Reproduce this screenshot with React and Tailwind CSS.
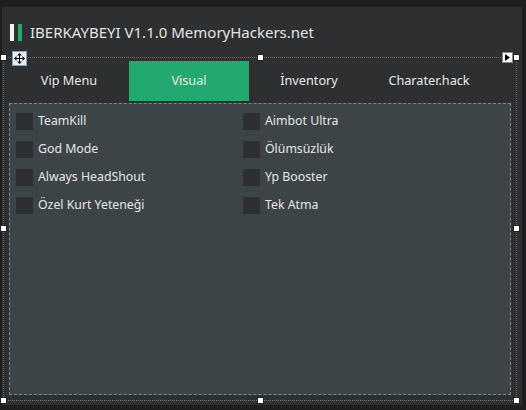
import { useState } from "react";

const TABS = ["Vip Menu", "Visual", "İnventory", "Charater.hack"];

const LEFT_OPTIONS = ["TeamKill", "God Mode", "Always HeadShout", "Özel Kurt Yeteneği"];
const RIGHT_OPTIONS = ["Aimbot Ultra", "Ölümsüzlük", "Yp Booster", "Tek Atma"];

function Handle({ className }) {
  return <div className={`absolute h-[7px] w-[7px] border border-[#222] bg-white ${className}`} />;
}

function Option({ label, checked, onToggle }) {
  return (
    <button type="button" onClick={onToggle} className="flex h-[28px] items-center gap-[5px] text-left">
      <span className="flex h-[17px] w-[17px] items-center justify-center bg-[#2d2f31]">
        {checked && <span className="h-[9px] w-[9px] bg-[#23a96f]" />}
      </span>
      <span className="text-[12.3px] text-[#e6e6e6]">{label}</span>
    </button>
  );
}

export default function App() {
  const [active, setActive] = useState(1);
  const [checked, setChecked] = useState({});

  const toggle = (key) => setChecked((cur) => ({ ...cur, [key]: !cur[key] }));

  return (
    <div
      className="h-[410px] w-[526px] overflow-hidden bg-[#1e1e1e] pt-[7px]"
      style={{ fontFamily: '"Noto Sans", "Open Sans", sans-serif' }}
    >
      <div className="relative ml-[2px] h-[398px] w-[520px] bg-[#2d2f31]">
        {/* title */}
        <div className="flex h-[50px] items-center gap-[4px] pl-[8px] pt-[1px]">
          <span className="h-[17px] w-[4px] bg-[#f2f2f2]" />
          <span className="h-[17px] w-[4px] bg-[#23a96f]" />
          <span className="ml-[4px] text-[15px] text-[#e4e4e4]">IBERKAYBEYI V1.1.0 MemoryHackers.net</span>
        </div>

        {/* selected tab control */}
        <div className="relative ml-[1px] h-[344px] w-[514px] border border-dotted border-[#6f7275] px-[5px] pt-[3px]">
          <div className="flex h-[40px]">
            {TABS.map((tab, i) => (
              <button
                key={tab}
                type="button"
                onClick={() => setActive(i)}
                className={`flex w-[120px] items-center justify-center text-[12.7px] text-[#e8e8e8] ${
                  i === active ? "bg-[#23a96f]" : ""
                }`}
              >
                {tab}
              </button>
            ))}
          </div>

          <div className="mt-[2px] h-[292px] w-[502px] border border-dashed border-[#7b878b] bg-[#3c4447] pl-[6px] pt-[3px]">
            <div className="flex">
              <div className="flex w-[227px] flex-col">
                {LEFT_OPTIONS.map((o) => (
                  <Option key={o} label={o} checked={checked[o]} onToggle={() => toggle(o)} />
                ))}
              </div>
              <div className="flex flex-col">
                {RIGHT_OPTIONS.map((o) => (
                  <Option key={o} label={o} checked={checked[o]} onToggle={() => toggle(o)} />
                ))}
              </div>
            </div>
          </div>

          {/* move glyph */}
          <div className="absolute left-[8px] top-[-7px] flex h-[15px] w-[15px] items-center justify-center border border-[#8aa0c0] bg-[#e8eef8]">
            <svg width="11" height="11" viewBox="0 0 11 11" fill="#111">
              <path d="M5 1h1v9H5zM1 5h9v1H1z" />
              <path d="M5.5 0L8 2.5H3zM5.5 11L3 8.5h5zM0 5.5L2.5 3v5zM11 5.5L8.5 8V3z" />
            </svg>
          </div>

          {/* smart tag */}
          <div className="absolute right-[3px] top-[-6px] flex h-[11px] w-[11px] items-center justify-center border border-[#888] bg-white">
            <svg width="5" height="7" viewBox="0 0 5 7" fill="#000">
              <path d="M0 0l5 3.5L0 7z" />
            </svg>
          </div>

          <Handle className="left-[-4px] top-[-4px]" />
          <Handle className="left-[253px] top-[-4px]" />
          <Handle className="right-[-4px] top-[-4px]" />
          <Handle className="left-[-4px] top-[167px]" />
          <Handle className="right-[-4px] top-[167px]" />
          <Handle className="bottom-[-4px] left-[-4px]" />
          <Handle className="bottom-[-4px] left-[253px]" />
          <Handle className="bottom-[-4px] right-[-4px]" />
        </div>
      </div>
    </div>
  );
}
